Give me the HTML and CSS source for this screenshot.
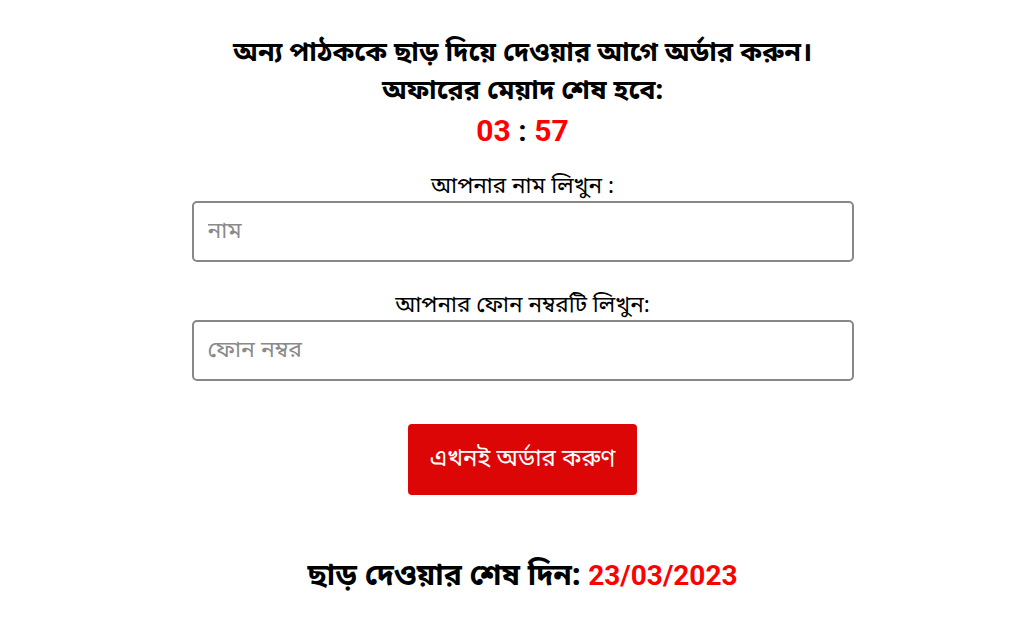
FILE: index.html
```html
<!DOCTYPE html>
<html lang="bn">
<head>
<meta charset="utf-8">
<link rel="stylesheet" href="styles.css">
</head>
<body>
<main class="page">
  <h2 class="headline">অন্য পাঠককে ছাড় দিয়ে দেওয়ার আগে অর্ডার করুন।<br>অফারের মেয়াদ শেষ হবে:</h2>
  <div class="timer"><span class="num">03</span> <span class="sep">:</span> <span class="num">57</span></div>
  <form class="form">
    <label class="label" for="name">আপনার নাম লিখুন :</label>
    <input class="field" id="name" type="text" placeholder="নাম">
    <label class="label label-2" for="phone">আপনার ফোন নম্বরটি লিখুন:</label>
    <input class="field" id="phone" type="text" placeholder="ফোন নম্বর">
    <button class="btn" type="button">এখনই অর্ডার করুণ</button>
  </form>
  <p class="deadline">ছাড় দেওয়ার শেষ দিন: <span class="date">23/03/2023</span></p>
</main>
</body>
</html>
```
FILE: styles.css
```css
* { box-sizing: border-box; }
html, body { margin: 0; padding: 0; background: #fff; }
body {
  font-family: "Noto Sans Bengali", "Noto Sans", "DejaVu Sans", sans-serif;
  color: #000;
}
.page {
  display: flex;
  flex-direction: column;
  align-items: center;
  padding-top: 35px;
  padding-left: 21px;
}
.headline {
  margin: 0;
  font-size: 27px;
  font-weight: 700;
  line-height: 38px;
  text-align: center;
}
.timer {
  margin-top: 3px;
  font-family: Roboto, "Liberation Sans", sans-serif;
  font-weight: 700;
  font-size: 30px;
  line-height: 34px;
  color: #000;
}
.timer .num { color: #f00; }
.form {
  width: 662px;
  display: flex;
  flex-direction: column;
  align-items: center;
  margin-top: 25px;
}
.label {
  font-size: 22.5px;
  line-height: 28px;
  margin-bottom: 0;
}
.label-2 { margin-top: 30px; }
.field {
  width: 100%;
  height: 61px;
  border: 2px solid #888;
  border-radius: 5px;
  padding: 0 14px;
  font-family: inherit;
  font-size: 23px;
  color: #333;
  outline: none;
}
.field::placeholder { color: #8a8a8a; }
.btn {
  margin-top: 43px;
  width: 229px;
  height: 71px;
  background: #dd0606;
  color: #fff;
  border: none;
  border-radius: 4px;
  font-family: inherit;
  font-size: 24px;
}
.deadline {
  margin: 64px 0 0;
  font-size: 30px;
  font-weight: 700;
  line-height: 34px;
}
.date {
  font-family: Roboto, "Liberation Sans", sans-serif;
  font-size: 28px;
  color: #f00;
}
```
